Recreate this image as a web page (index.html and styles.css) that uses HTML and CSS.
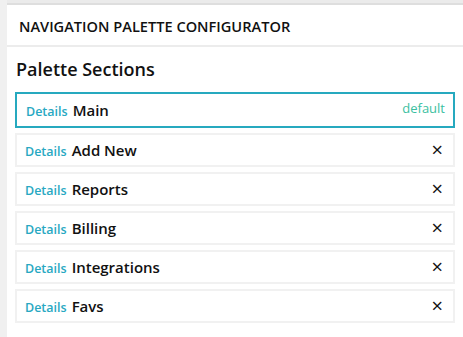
FILE: index.html
```html
<!DOCTYPE html>
<html>
<head>
	<title>Navigation Palette Configurator</title>
	<link rel="stylesheet" href="styles.css">
</head>
<body>
	<main class="panel">
		<header class="panel-head">NAVIGATION PALETTE CONFIGURATOR</header>

		<section class="panel-body">
			<h2>Palette Sections</h2>

			<div class="sections">
				<div class="section active">
					<a class="details">Details</a>
					<span class="name">Main</span>
					<span class="tag">default</span>
				</div>
				<div class="section">
					<a class="details">Details</a>
					<span class="name">Add New</span>
					<span class="close">&times;</span>
				</div>
				<div class="section">
					<a class="details">Details</a>
					<span class="name">Reports</span>
					<span class="close">&times;</span>
				</div>
				<div class="section">
					<a class="details">Details</a>
					<span class="name">Billing</span>
					<span class="close">&times;</span>
				</div>
				<div class="section">
					<a class="details">Details</a>
					<span class="name">Integrations</span>
					<span class="close">&times;</span>
				</div>
				<div class="section">
					<a class="details">Details</a>
					<span class="name">Favs</span>
					<span class="close">&times;</span>
				</div>
			</div>
		</section>
	</main>
</body>
</html>
```

FILE: styles.css
```css
body {
	margin: 0;
	background-color: #f0f0f0;
	font-family: 'Open Sans', sans-serif;
	color: #111;
}

.panel {
	margin-left: 7px;
	border-top: 3px solid #ebebeb;
	box-shadow: inset 0 2px 0 #dedede;
	padding-top: 2px;
	background-color: white;
	min-height: 332px;
}

.panel-head {
	padding: 11px 12px 9px 12px;
	font-size: 14.6px;
	font-weight: 600;
	line-height: 20px;
	border-bottom: 2px solid #ececec;
}

.panel-body {
	padding: 0 8px 0 8px;
}

.panel-body h2 {
	margin: 10px 0 11px 1px;
	font-size: 18px;
	font-weight: 600;
	line-height: 24px;
}

.sections {
	display: flex;
	flex-direction: column;
	gap: 5px;
}

.section {
	display: flex;
	align-items: center;
	height: 30px;
	padding: 0 8px 0 8px;
	border: 2px solid #f1f1f1;
}

.section.active {
	height: 32px;
	padding-left: 9px;
	border-color: #26a9bf;
}

.section .details {
	color: #28a8c2;
	font-size: 12.5px;
	font-weight: 600;
	margin-right: 5px;
	padding-top: 2px;
}

.section .name {
	font-size: 15px;
	font-weight: 600;
	flex: 1;
}

.section .tag {
	color: #3bbf9f;
	font-size: 13px;
	margin-top: -5px;
}

.section .close {
	font-size: 20px;
	line-height: 20px;
	margin-right: 2px;
}
```
